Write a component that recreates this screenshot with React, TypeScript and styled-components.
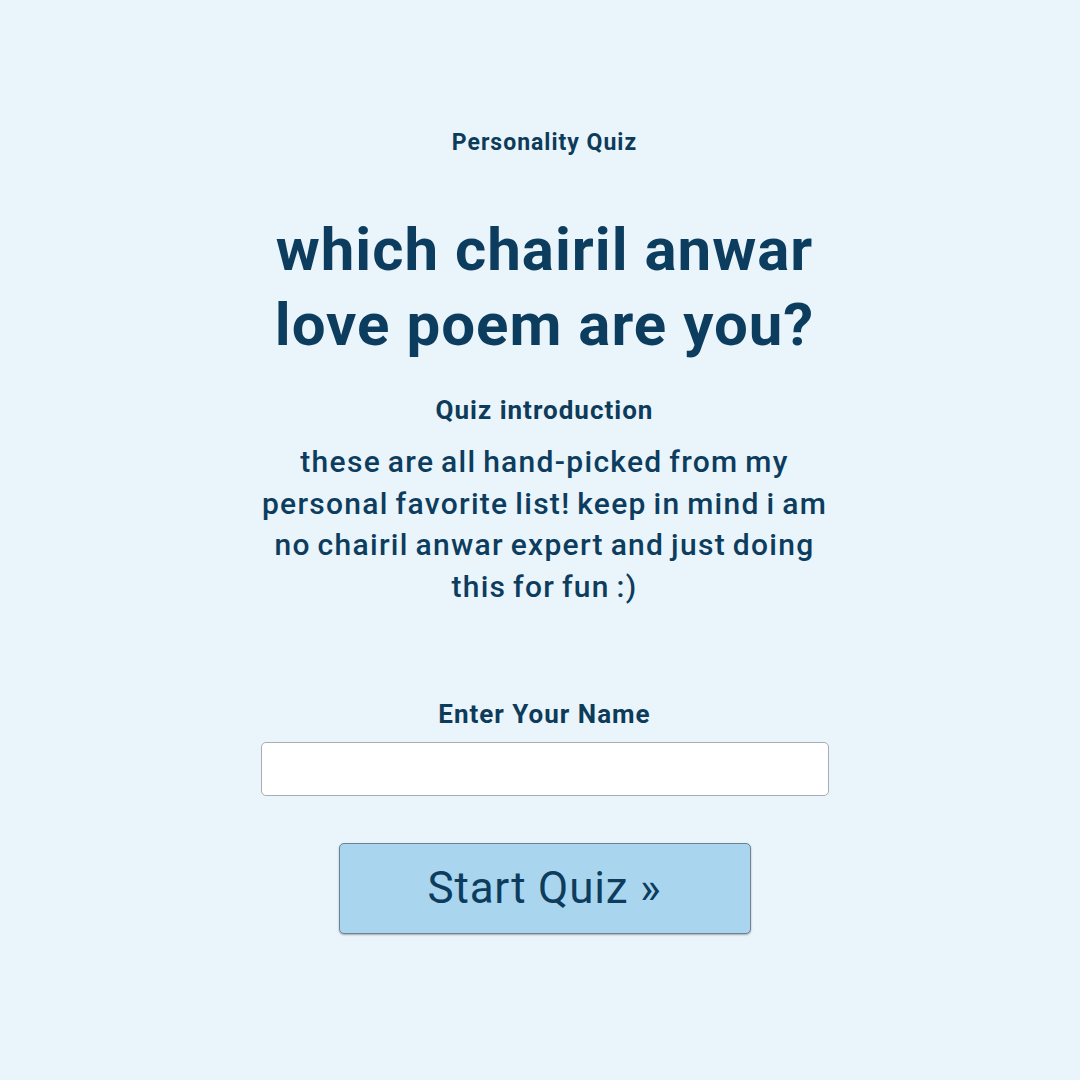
import styled, { createGlobalStyle } from 'styled-components';

const GlobalStyle = createGlobalStyle`
  html, body {
    margin: 0;
    padding: 0;
    background: #eaf4fb;
  }
  * {
    box-sizing: border-box;
  }
`;

const App = () => {
  return (
    <>
      <GlobalStyle />
      <Page>
        <Quiz>
          <Kicker>Personality Quiz</Kicker>
          <Title>which chairil anwar love poem are you?</Title>
          <SectionLabel>Quiz introduction</SectionLabel>
          <Intro>
            these are all hand-picked from my personal favorite list! keep in mind i am no chairil
            anwar expert and just doing this for fun :)
          </Intro>
          <NameLabel htmlFor="name">Enter Your Name</NameLabel>
          <NameInput id="name" type="text" />
          <StartButton type="button">Start Quiz »</StartButton>
        </Quiz>
      </Page>
    </>
  );
};

const StartButton = styled.button`
  all: unset;
  cursor: pointer;
  margin-top: 47px;
  width: 412px;
  height: 91px;
  display: flex;
  justify-content: center;
  align-items: center;
  background: #a9d6ee;
  color: #0d3d5e;
  font-family: Roboto, 'Noto Sans', sans-serif;
  font-size: 44px;
  letter-spacing: 0.8px;
  font-weight: 400;
  border: 1px solid #6f8290;
  border-radius: 5px;
  box-shadow: 0 1px 2px rgba(0, 0, 0, 0.3);
  box-sizing: border-box;
`;
const NameInput = styled.input`
  margin-top: 13px;
  width: 568px;
  height: 54px;
  background: #ffffff;
  border: 1px solid #a9adb1;
  border-radius: 5px;
  padding: 0 12px;
  font-family: Roboto, sans-serif;
  font-size: 20px;
  outline: none;
`;
const NameLabel = styled.label`
  margin-top: 91px;
  font-family: Roboto, sans-serif;
  font-size: 26px;
  line-height: 30px;
  letter-spacing: 1px;
  font-weight: 700;
  color: #0d3b5a;
`;
const Intro = styled.p`
  margin: 16px 0 0;
  font-family: Roboto, sans-serif;
  font-size: 30px;
  line-height: 41.7px;
  font-weight: 500;
  letter-spacing: 1.3px;
  word-spacing: -2px;
  text-align: center;
  color: #0d3d5e;
`;
const SectionLabel = styled.h3`
  margin: 33px 0 0;
  font-family: Roboto, sans-serif;
  font-size: 26px;
  line-height: 30px;
  letter-spacing: 1px;
  font-weight: 700;
  color: #0d3b5a;
`;
const Title = styled.h1`
  margin: 56px 0 0;
  font-family: Roboto, sans-serif;
  font-size: 60px;
  line-height: 75px;
  letter-spacing: 1px;
  font-weight: 700;
  text-align: center;
  color: #0d3d5e;
  max-width: 568px;
`;
const Kicker = styled.h2`
  margin: 0;
  font-family: Roboto, sans-serif;
  font-size: 23px;
  line-height: 26px;
  letter-spacing: 1px;
  font-weight: 700;
  color: #0d3b5a;
`;
const Quiz = styled.main`
  width: 568px;
  display: flex;
  flex-direction: column;
  align-items: center;
`;
const Page = styled.div`
  min-height: 1080px;
  display: flex;
  justify-content: center;
  padding: 130px 0 0 9px;
  background: #eaf4fb;
`;

export default App;
